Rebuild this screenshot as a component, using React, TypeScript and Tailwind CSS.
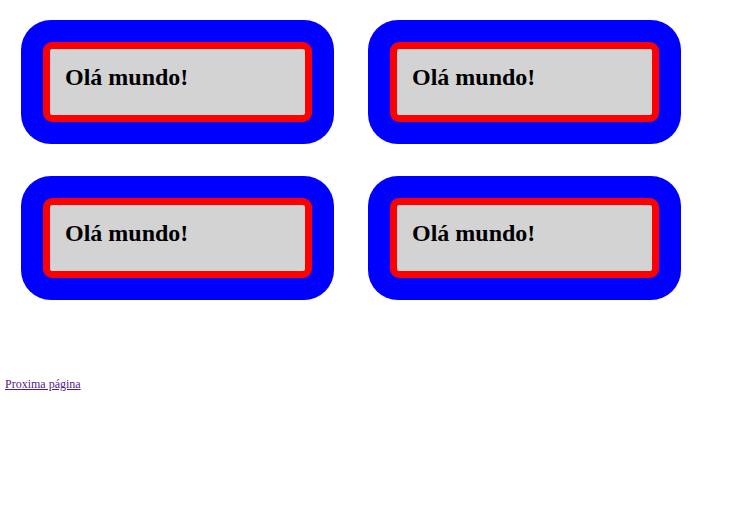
const Card = () => (
  <div className="w-[313px] h-[124px] rounded-[30px] bg-[#0000ff] p-[22px]">
    <div className="h-[80px] rounded-[9px] border-[7px] border-[#ff0000] bg-[#d3d3d3] pl-[15px] pt-[15px]">
      <h2 className="text-[24px] font-bold leading-[27.6px] text-black">Olá mundo!</h2>
    </div>
  </div>
)

export default function App() {
  return (
    <div className="min-h-[507px] bg-white font-['Liberation_Serif',serif]">
      <div className="grid grid-cols-[313px_313px] gap-x-[34px] gap-y-[32px] pl-[21px] pt-[20px]">
        <Card />
        <Card />
        <Card />
        <Card />
      </div>
      <div className="mt-[75px] pl-[5px] text-[12px] leading-normal">
        <a href="#" className="text-[#551a8b] underline">
          Proxima página
        </a>
      </div>
    </div>
  )
}
